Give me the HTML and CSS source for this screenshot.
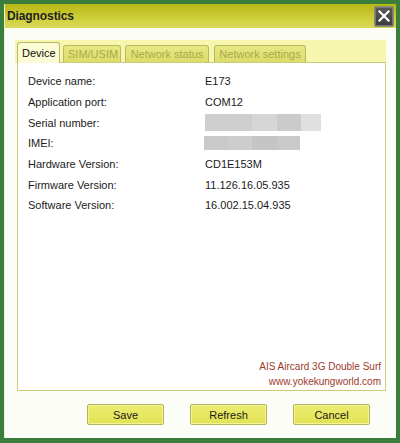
FILE: index.html
```html
<!DOCTYPE html>
<html>
<head>
<meta charset="utf-8">
<link rel="stylesheet" href="styles.css">
</head>
<body>
<div class="window">
  <div class="dialog">
    <div class="titlebar">
      <span class="title">Diagnostics</span>
      <button class="close" aria-label="Close">
        <svg width="12" height="12" viewBox="0 0 12 12"><path d="M1.5 1.5 L10.5 10.5 M10.5 1.5 L1.5 10.5" stroke="#fff" stroke-width="2.2" stroke-linecap="square"/></svg>
      </button>
    </div>
    <div class="main">
      <div class="tabs">
        <div class="tab active">Device</div>
        <div class="tab">SIM/USIM</div>
        <div class="tab">Network status</div>
        <div class="tab">Network settings</div>
      </div>
      <div class="panel">
        <div class="rows">
          <div class="label">Device name:</div><div class="value">E173</div>
          <div class="label">Application port:</div><div class="value">COM12</div>
          <div class="label">Serial number:</div>
          <div class="value"><div class="blur serial"><span class="s1"></span><span class="s2"></span><span class="s3"></span><span class="s4"></span></div></div>
          <div class="label">IMEI:</div>
          <div class="value"><div class="blur imei"><span class="i1"></span><span class="i2"></span><span class="i3"></span><span class="i4"></span></div></div>
          <div class="label">Hardware Version:</div><div class="value">CD1E153M</div>
          <div class="label">Firmware Version:</div><div class="value">11.126.16.05.935</div>
          <div class="label">Software Version:</div><div class="value">16.002.15.04.935</div>
        </div>
        <div class="watermark">
          <div>AIS Aircard 3G Double Surf</div>
          <div>www.yokekungworld.com</div>
        </div>
      </div>
    </div>
    <div class="buttons">
      <button class="btn">Save</button>
      <button class="btn">Refresh</button>
      <button class="btn">Cancel</button>
    </div>
  </div>
</div>
</body>
</html>
```
FILE: styles.css
```css
* { box-sizing: border-box; }
html, body { margin: 0; padding: 0; }
body {
  width: 400px;
  height: 443px;
  font-family: "Liberation Sans", Arial, sans-serif;
  color: #1a1a1a;
  overflow: hidden;
}
.window {
  width: 400px;
  height: 443px;
  background: #3b7d3b;
  padding: 4px 4px 5px 4px;
}
.dialog {
  height: 434px;
  background: #fdfdf8;
  display: flex;
  flex-direction: column;
  border-left: 1px solid #e8f0d8;
}
.titlebar {
  height: 24px;
  flex: none;
  display: flex;
  align-items: center;
  justify-content: space-between;
  padding: 0 2px 0 2px;
  background: linear-gradient(#b6b614, #cfcf3a 60%, #dada5c);
}
.title {
  font-weight: bold;
  font-size: 12px;
  letter-spacing: -0.1px;
  color: #222;
}
.close {
  width: 20px;
  height: 21px;
  padding: 0;
  margin: 0;
  border: 1px solid #8a8a70;
  border-radius: 2px;
  background: linear-gradient(#5a5a5a, #3c3c3c);
  display: flex;
  align-items: center;
  justify-content: center;
  box-shadow: inset 0 0 0 1px #777;
}
.main {
  padding: 12px 10px 0 10px;
}
.tabs {
  height: 22px;
  background: #f6f6ae;
  display: flex;
  align-items: flex-end;
  padding-left: 2px;
  gap: 3px;
  position: relative;
  z-index: 1;
}
.tab {
  height: 17px;
  font-size: 11px;
  line-height: 16px;
  padding: 0 4px;
  border: 1px solid #b8b862;
  border-bottom: none;
  border-radius: 3px 3px 0 0;
  background: linear-gradient(#e8e884, #dcdc6a);
  color: #a9a94e;
  text-align: center;
}
.tab:nth-child(2) { width: 58px; }
.tab:nth-child(3) { width: 84px; margin-left: 1px; }
.tab:nth-child(4) { width: 92px; margin-left: 2px; }
.tab.active {
  width: 43px;
  height: 21px;
  margin-bottom: -1px;
  line-height: 20px;
  background: #fbfbd6;
  color: #111;
  border-color: #b9b96a;
}
.panel {
  margin-left: 2px;
  height: 329px;
  border: 1px solid #cbcb7c;
  background: #fff;
  display: flex;
  flex-direction: column;
  padding: 8px 4px 1px 10px;
}
.rows {
  display: grid;
  grid-template-columns: 177px 1fr;
  grid-auto-rows: 20.7px;
  align-items: center;
  font-size: 11px;
  color: #1a1a1a;
}
.blur { display: flex; }
.blur span { display: block; }
.serial { height: 17px; }
.s1 { width: 47px; background: #cecece; }
.s2 { width: 25px; background: #d6d6d6; }
.s3 { width: 24px; background: #cbcbcb; }
.s4 { width: 20px; background: #e0e0e0; }
.imei { height: 14px; margin-left: -1px; }
.i1 { width: 24px; background: #c9c9c9; }
.i2 { width: 24px; background: #cdcdcd; }
.i3 { width: 25px; background: #c5c5c5; }
.i4 { width: 23px; background: #c9c9c9; }
.watermark {
  margin-top: auto;
  text-align: right;
  font-size: 10px;
  line-height: 15px;
  color: #9c3a2c;
}
.buttons {
  display: flex;
  gap: 26px;
  padding-left: 82px;
  margin-top: 13px;
}
.btn {
  width: 77px;
  height: 21px;
  padding: 0;
  font-family: "Liberation Sans", Arial, sans-serif;
  font-size: 11px;
  color: #1a1a1a;
  border: 1px solid #b4b45c;
  border-radius: 2px;
  background: linear-gradient(#ecec70, #e2e254);
  box-shadow: inset 0 0 0 1px #f3f39a;
}
```
